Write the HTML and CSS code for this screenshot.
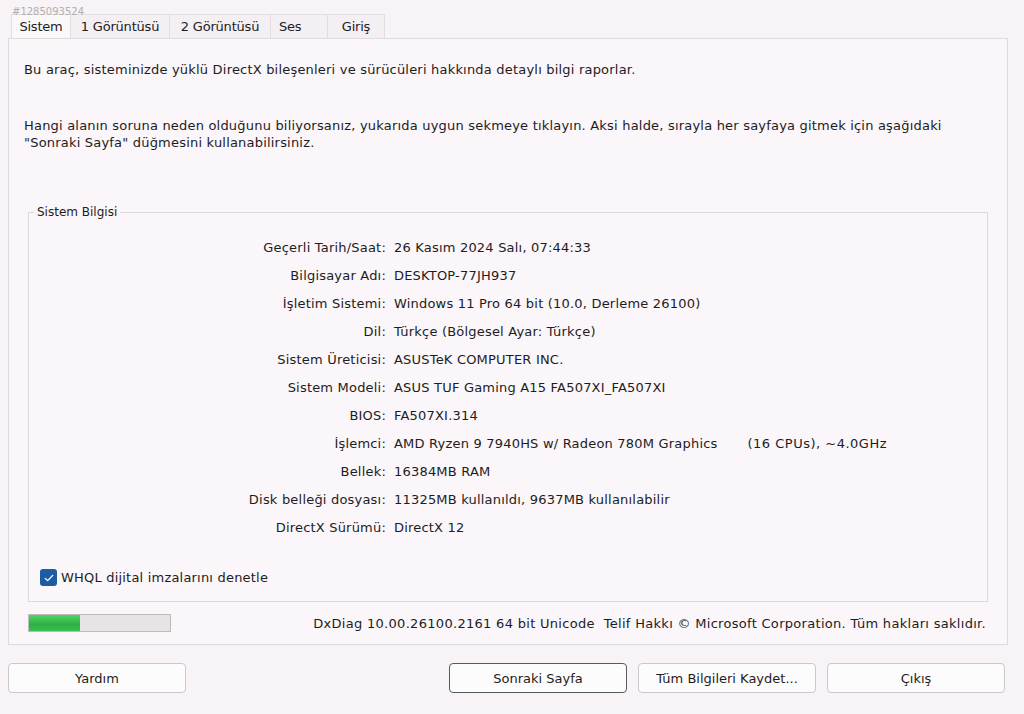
FILE: index.html
```html
<!DOCTYPE html>
<html lang="tr">
<head>
    <meta charset="UTF-8">
    <title>DirectX Tanılama Aracı</title>
    <link rel="stylesheet" href="styles.css">
</head>
<body>
    <div class="window">
        <span class="stamp">#1285093524</span>

        <div class="tabs">
            <div class="tab active">Sistem</div>
            <div class="tab">1 Görüntüsü</div>
            <div class="tab">2 Görüntüsü</div>
            <div class="tab">Ses</div>
            <div class="tab">Giriş</div>
        </div>

        <div class="panel">
            <p class="intro">Bu araç, sisteminizde yüklü DirectX bileşenleri ve sürücüleri hakkında detaylı bilgi raporlar.</p>
            <p class="hint">Hangi alanın soruna neden olduğunu biliyorsanız, yukarıda uygun sekmeye tıklayın. Aksi halde, sırayla her sayfaya gitmek için aşağıdaki<br>"Sonraki Sayfa" düğmesini kullanabilirsiniz.</p>

            <fieldset class="group">
                <legend>Sistem Bilgisi</legend>
                <div class="info">
                    <span class="label">Geçerli Tarih/Saat:</span><span class="value">26 Kasım 2024 Salı, 07:44:33</span>
                    <span class="label">Bilgisayar Adı:</span><span class="value">DESKTOP-77JH937</span>
                    <span class="label">İşletim Sistemi:</span><span class="value">Windows 11 Pro 64 bit (10.0, Derleme 26100)</span>
                    <span class="label">Dil:</span><span class="value">Türkçe (Bölgesel Ayar: Türkçe)</span>
                    <span class="label">Sistem Üreticisi:</span><span class="value">ASUSTeK COMPUTER INC.</span>
                    <span class="label">Sistem Modeli:</span><span class="value">ASUS TUF Gaming A15 FA507XI_FA507XI</span>
                    <span class="label">BIOS:</span><span class="value">FA507XI.314</span>
                    <span class="label">İşlemci:</span><span class="value">AMD Ryzen 9 7940HS w/ Radeon 780M Graphics<span class="cpus">(16 CPUs), ~4.0GHz</span></span>
                    <span class="label">Bellek:</span><span class="value">16384MB RAM</span>
                    <span class="label">Disk belleği dosyası:</span><span class="value">11325MB kullanıldı, 9637MB kullanılabilir</span>
                    <span class="label">DirectX Sürümü:</span><span class="value">DirectX 12</span>
                </div>
                <label class="check">
                    <span class="box">
                        <svg viewBox="0 0 16 16" width="12" height="12"><path d="M3 8.5l3.2 3L13 4.5" fill="none" stroke="#fff" stroke-width="1.8" stroke-linecap="round" stroke-linejoin="round"/></svg>
                    </span>
                    WHQL dijital imzalarını denetle
                </label>
            </fieldset>

            <div class="status">
                <div class="progress"><div class="fill" style="width: 36%"></div></div>
                <div class="copyright">DxDiag 10.00.26100.2161 64 bit Unicode&nbsp; Telif Hakkı © Microsoft Corporation. Tüm hakları saklıdır.</div>
            </div>
        </div>

        <div class="buttons">
            <button class="btn">Yardım</button>
            <div class="right">
                <button class="btn default">Sonraki Sayfa</button>
                <button class="btn">Tüm Bilgileri Kaydet...</button>
                <button class="btn">Çıkış</button>
            </div>
        </div>
    </div>
</body>
</html>
```

FILE: styles.css
```css
body {
    margin: 0;
    background-color: #f8f3f6;
    color: #1e1c1e;
    font-family: "DejaVu Sans", Verdana, sans-serif;
    font-size: 13px;
    letter-spacing: 0.2px;
}
.window {
    position: relative;
    width: 1024px;
    height: 714px;
    padding: 14px 8px 0 8px;
    box-sizing: border-box;
}
.stamp {
    position: absolute;
    left: 12px;
    top: 6px;
    font-size: 10px;
    letter-spacing: 0;
    color: #b3aeb1;
}
.tabs {
    display: flex;
    height: 24px;
    padding-left: 4px;
}
.tab {
    display: flex;
    align-items: center;
    justify-content: center;
    border: 1px solid #e2dde0;
    border-bottom: none;
    margin-left: -1px;
    background-color: #f4eff2;
    font-size: 13px;
    letter-spacing: -0.2px;
}
.tab:nth-child(1) { width: 58px; background-color: #fbf8fa; }
.tab:nth-child(2) { width: 98px; }
.tab:nth-child(3) { width: 100px; }
.tab:nth-child(4) { width: 58px; justify-content: flex-start; padding-left: 8px; box-sizing: border-box; }
.tab:nth-child(5) { width: 56px; }
.panel {
    border: 1px solid #dedadd;
    background-color: #faf6f9;
    height: 607px;
    margin-right: 8px;
    box-sizing: border-box;
    padding: 22px 19px 0 15px;
}
.intro {
    margin: 0;
    line-height: 18px;
}
.hint {
    margin: 38px 0 0;
    line-height: 17px;
}
.group {
    margin: 54px 0 0 4px;
    padding: 0 0 10px 0;
    border: 1px solid #dcd8db;
    height: 397px;
    box-sizing: border-box;
}
.group legend {
    margin-left: 5px;
    padding: 0 3px;
    font-size: 12px;
    line-height: 14px;
    letter-spacing: 0;
}
.info {
    display: grid;
    grid-template-columns: 357px 1fr;
    column-gap: 8px;
    row-gap: 10px;
    margin-top: 20px;
    line-height: 18px;
}
.label {
    text-align: right;
}
.value {
    white-space: nowrap;
}
.cpus {
    margin-left: 30px;
    letter-spacing: 0.5px;
}
.check {
    display: flex;
    align-items: center;
    gap: 4px;
    margin: 32px 0 0 11px;
}
.check .box {
    width: 17px;
    height: 17px;
    border-radius: 3px;
    background-color: #1d5ba3;
    display: flex;
    align-items: center;
    justify-content: center;
}
.status {
    display: flex;
    align-items: center;
    justify-content: space-between;
    margin-top: 12px;
    padding-left: 4px;
}
.progress {
    width: 141px;
    height: 16px;
    border: 1px solid #bdbabc;
    background-color: #e6e4e5;
}
.fill {
    height: 100%;
    background: linear-gradient(to bottom, #4fd764, #2eae45 60%, #38c24f);
}
.copyright {
    font-size: 13px;
    letter-spacing: 0.3px;
    margin-right: 2px;
}
.buttons {
    display: flex;
    justify-content: space-between;
    margin-top: 18px;
}
.buttons .right {
    display: flex;
    gap: 11px;
    margin-right: 11px;
}
.btn {
    width: 178px;
    height: 30px;
    background-color: #fdfcfd;
    border: 1px solid #cbc7ca;
    border-radius: 4px;
    font-family: "DejaVu Sans", Verdana, sans-serif;
    font-size: 13px;
    color: #1e1c1e;
}
.btn.default {
    border-color: #5a5a5a;
}
```
